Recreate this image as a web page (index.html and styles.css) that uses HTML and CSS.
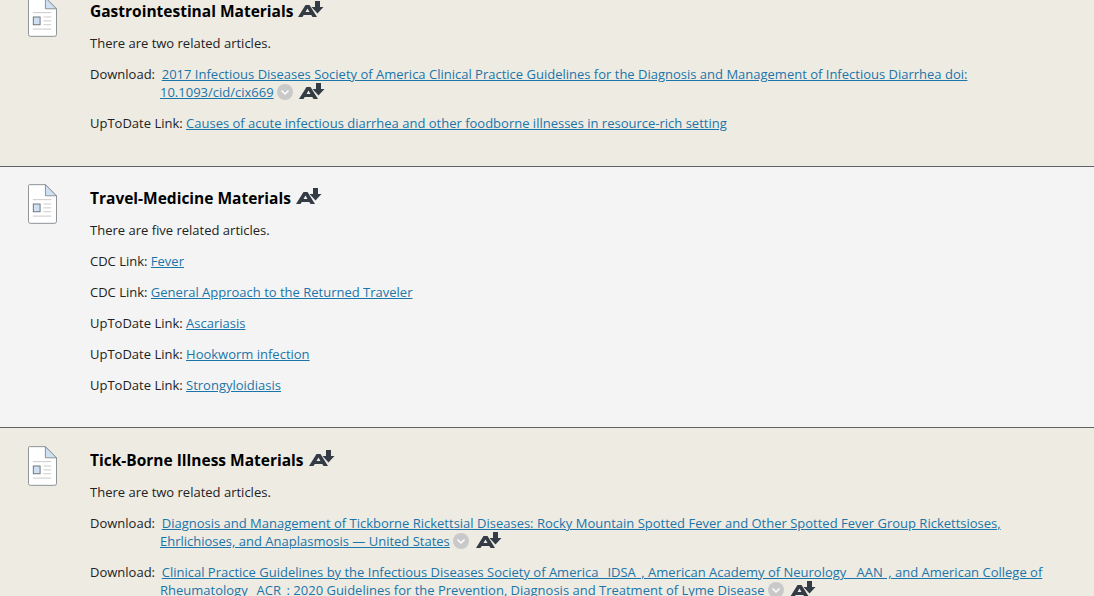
FILE: index.html
```html
<!DOCTYPE html>
<html lang="en">
<head>
  <meta charset="UTF-8" />
  <meta name="viewport" content="width=device-width, initial-scale=1.0" />
  <title>Related Materials</title>
  <link rel="stylesheet" href="styles.css">
</head>
<body>

  <svg class="defs" width="0" height="0">
    <symbol id="doc" viewBox="0 0 30 41">
      <path d="M1.5 .5H18L29.5 12V38.500a2 2 0 0 1-2 2H2.500a2 2 0 0 1-2-2V1.500a1 1 0 0 1 1-1z" fill="#fff" stroke="#8a8f94"/>
      <path d="M18 .5L29.500 12H18z" fill="#cfe0f3" stroke="#8a8f94"/>
      <path d="M5 16H24M16 20.500H24M16 24.500H24M16 28.500H24M5 33H24" stroke="#c9c9c9" fill="none"/>
      <rect x="5.500" y="20.500" width="7" height="8" fill="#cfe0f3" stroke="#6d7378"/>
    </symbol>
    <symbol id="fontdown" viewBox="0 0 26 17">
      <path d="M0 16L7.500 4H11.500L19 16H14.500L13.300 14H5.700L4.500 16zM7.500 11H11.500L9.500 7.500z" fill="#333c44"/>
      <path d="M17 0H22V6H25.500L19.500 12.500L13.500 6H17z" fill="#333c44"/>
    </symbol>
    <symbol id="chev" viewBox="0 0 16 16">
      <circle cx="8" cy="8" r="8" fill="#c9c9c9"/>
      <path d="M4.500 6.500L8 10L11.500 6.500" fill="none" stroke="#fff" stroke-width="1.500"/>
    </symbol>
  </svg>

  <section class="block tan">
    <svg class="doc-icon"><use href="#doc"/></svg>
    <div class="block-body">
      <h2>Gastrointestinal Materials <svg class="font-icon"><use href="#fontdown"/></svg></h2>
      <p>There are two related articles.</p>
      <p class="download">Download: &nbsp;<a href="#">2017 Infectious Diseases Society of America Clinical Practice Guidelines for the Diagnosis and Management of Infectious Diarrhea doi: 10.1093/cid/cix669</a> <svg class="chev"><use href="#chev"/></svg> <svg class="font-icon small"><use href="#fontdown"/></svg></p>
      <p>UpToDate Link: <a href="#">Causes of acute infectious diarrhea and other foodborne illnesses in resource-rich setting</a></p>
    </div>
  </section>

  <section class="block grey">
    <svg class="doc-icon"><use href="#doc"/></svg>
    <div class="block-body">
      <h2>Travel-Medicine Materials <svg class="font-icon"><use href="#fontdown"/></svg></h2>
      <p>There are five related articles.</p>
      <p>CDC Link: <a href="#">Fever</a></p>
      <p>CDC Link: <a href="#">General Approach to the Returned Traveler</a></p>
      <p>UpToDate Link: <a href="#">Ascariasis</a></p>
      <p>UpToDate Link: <a href="#">Hookworm infection</a></p>
      <p>UpToDate Link: <a href="#">Strongyloidiasis</a></p>
    </div>
  </section>

  <section class="block tan last">
    <svg class="doc-icon"><use href="#doc"/></svg>
    <div class="block-body">
      <h2>Tick-Borne Illness Materials <svg class="font-icon"><use href="#fontdown"/></svg></h2>
      <p>There are two related articles.</p>
      <p class="download">Download: &nbsp;<a href="#">Diagnosis and Management of Tickborne Rickettsial Diseases: Rocky Mountain Spotted Fever and Other Spotted Fever Group Rickettsioses, Ehrlichioses, and Anaplasmosis — United States</a> <svg class="chev"><use href="#chev"/></svg> <svg class="font-icon small"><use href="#fontdown"/></svg></p>
      <p class="download">Download: &nbsp;<a href="#">Clinical Practice Guidelines by the Infectious Diseases Society of America &nbsp;&#8201;IDSA&nbsp;&#8201;, American Academy of Neurology &nbsp;&nbsp;AAN&nbsp;&#8201;, and American College of Rheumatology &nbsp;&#8201;ACR&nbsp;&#8201;: 2020 Guidelines for the Prevention, Diagnosis and Treatment of Lyme Disease</a> <svg class="chev"><use href="#chev"/></svg> <svg class="font-icon small"><use href="#fontdown"/></svg></p>
    </div>
  </section>

</body>
</html>
```

FILE: styles.css
```css
* {
  margin: 0;
  padding: 0;
  box-sizing: border-box;
}

html, body {
  height: 596px;
  overflow: hidden;
}

body {
  font-family: "Open Sans", sans-serif;
  font-size: 13px;
  line-height: 18px;
  color: #222;
  background: #eeebe3;
}

.defs {
  position: absolute;
}

.block {
  display: flex;
  padding: 17px 0 0 28px;
  border-bottom: 1px solid #5f6363;
}

/* the page is scrolled a little in the screenshot */
.block:first-of-type {
  margin-top: -20px;
  height: 187px;
}

.block.tan {
  background: #eeebe3;
}

.block.grey {
  background: #f4f4f4;
  height: 261px;
}

.block.last {
  padding-top: 18px;
}

.doc-icon {
  flex: none;
  width: 29px;
  height: 40px;
  margin-right: 33px;
}

.block-body {
  flex: 1;
  padding-right: 30px;
}

h2 {
  font-size: 15.500px;
  line-height: 22px;
  font-weight: 700;
  color: #000;
  margin: 3px 0 12px;
}

p {
  margin-bottom: 13px;
}

.download {
  padding-left: 70px;
  text-indent: -70px;
}

a {
  color: #1b75a9;
  text-decoration: underline;
}

.font-icon {
  width: 26px;
  height: 17px;
  margin: -6px 0 -2px 1px;
  vertical-align: 1px;
}

.font-icon.small {
  margin-left: 3px;
  vertical-align: -1px;
}

.chev {
  width: 16px;
  height: 16px;
  margin: -4px 0;
  vertical-align: 1px;
}
```
